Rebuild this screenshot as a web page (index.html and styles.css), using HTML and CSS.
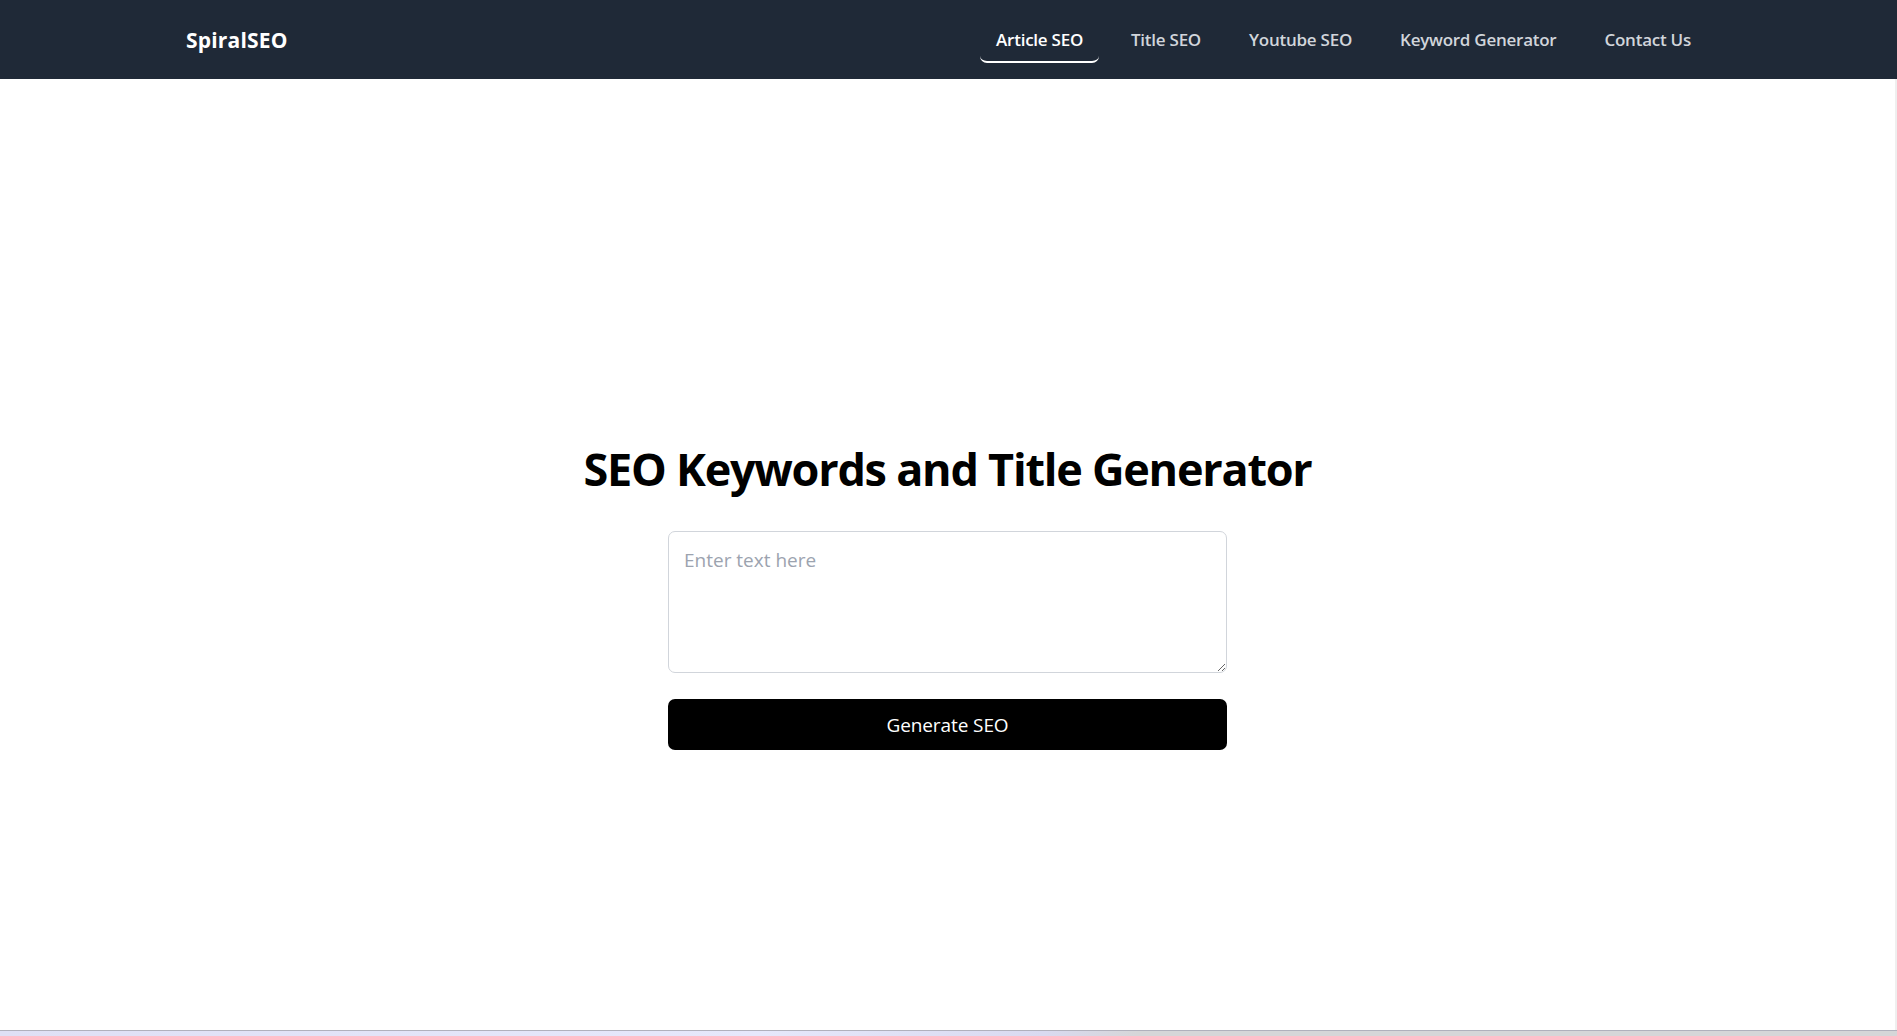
FILE: index.html
```html
<!DOCTYPE html>
<html lang="en">
<head>
<meta charset="utf-8">
<title>SpiralSEO</title>
<link rel="stylesheet" href="styles.css">
</head>
<body>
<div class="page">
  <nav class="navbar">
    <div class="nav-inner">
      <a class="logo" href="#">SpiralSEO</a>
      <ul class="nav-links">
        <li><a class="nav-link active" href="#">Article SEO</a></li>
        <li><a class="nav-link" href="#">Title SEO</a></li>
        <li><a class="nav-link" href="#">Youtube SEO</a></li>
        <li><a class="nav-link" href="#">Keyword Generator</a></li>
        <li><a class="nav-link" href="#">Contact Us</a></li>
      </ul>
    </div>
  </nav>
  <main class="main">
    <h1 class="title">SEO Keywords and Title Generator</h1>
    <form class="form">
      <textarea class="input" placeholder="Enter text here"></textarea>
      <button type="button" class="btn">Generate SEO</button>
    </form>
  </main>
</div>
<div class="taskbar"></div>
</body>
</html>
```

FILE: styles.css
```css
* { box-sizing: border-box; }
html, body { margin: 0; padding: 0; height: 100%; }
body {
  font-family: "Open Sans", "Noto Sans", sans-serif;
  background: #ffffff;
  color: #000;
  display: flex;
  flex-direction: column;
  overflow: hidden;
}
.page {
  flex: 1;
  display: flex;
  flex-direction: column;
}
.navbar {
  background: #1f2937;
  height: 79px;
  flex-shrink: 0;
}
.nav-inner {
  height: 100%;
  display: flex;
  align-items: center;
  justify-content: space-between;
  padding: 0 190px 0 186px;
}
.logo {
  color: #fff;
  font-weight: 700;
  font-size: 21px;
  text-decoration: none;
  letter-spacing: 0.2px;
  margin-top: 0;
}
.nav-links {
  list-style: none;
  margin: 0;
  padding: 0;
  display: flex;
  gap: 16px;
  margin-top: 3px;
}
.nav-link {
  display: block;
  color: #d1d5db;
  text-decoration: none;
  font-size: 17px;
  font-weight: 600;
  letter-spacing: -0.25px;
  padding: 7px 16px 9px;
  line-height: 25px;
  border-bottom: 2.5px solid transparent;
  border-radius: 7px;
}
.nav-link.active {
  color: #fff;
  border-bottom-color: #fff;
}
.main {
  flex: 1;
  display: flex;
  flex-direction: column;
  align-items: center;
  padding-top: 365px;
  border-right: 2px solid #efefef;
}
.title {
  margin: 0;
  font-size: 45px;
  line-height: 50px;
  font-weight: 700;
  letter-spacing: -1.25px;
}
.form {
  width: 559px;
  margin-top: 37px;
  display: flex;
  flex-direction: column;
  gap: 26px;
}
.input {
  width: 100%;
  height: 142px;
  border: 1.25px solid #d1d5db;
  border-radius: 7px;
  padding: 14px 15px 10px;
  font-family: inherit;
  font-size: 19px;
  line-height: 28px;
  resize: vertical;
  outline: none;
}
.input::placeholder { color: #9ca3af; }
.btn {
  height: 51px;
  width: 100%;
  background: #000;
  color: #fff;
  border: none;
  border-radius: 7px;
  font-family: inherit;
  font-size: 19px;
  letter-spacing: -0.1px;
  cursor: pointer;
}
.taskbar {
  height: 6px;
  flex-shrink: 0;
  border-top: 1px solid #b0b0bc;
  background: linear-gradient(90deg, #dfe0f5 0%, #e6e8fb 40%, #d9daf0 55%, #d6d6d8 60%, #d6d6d8 100%);
}
```
